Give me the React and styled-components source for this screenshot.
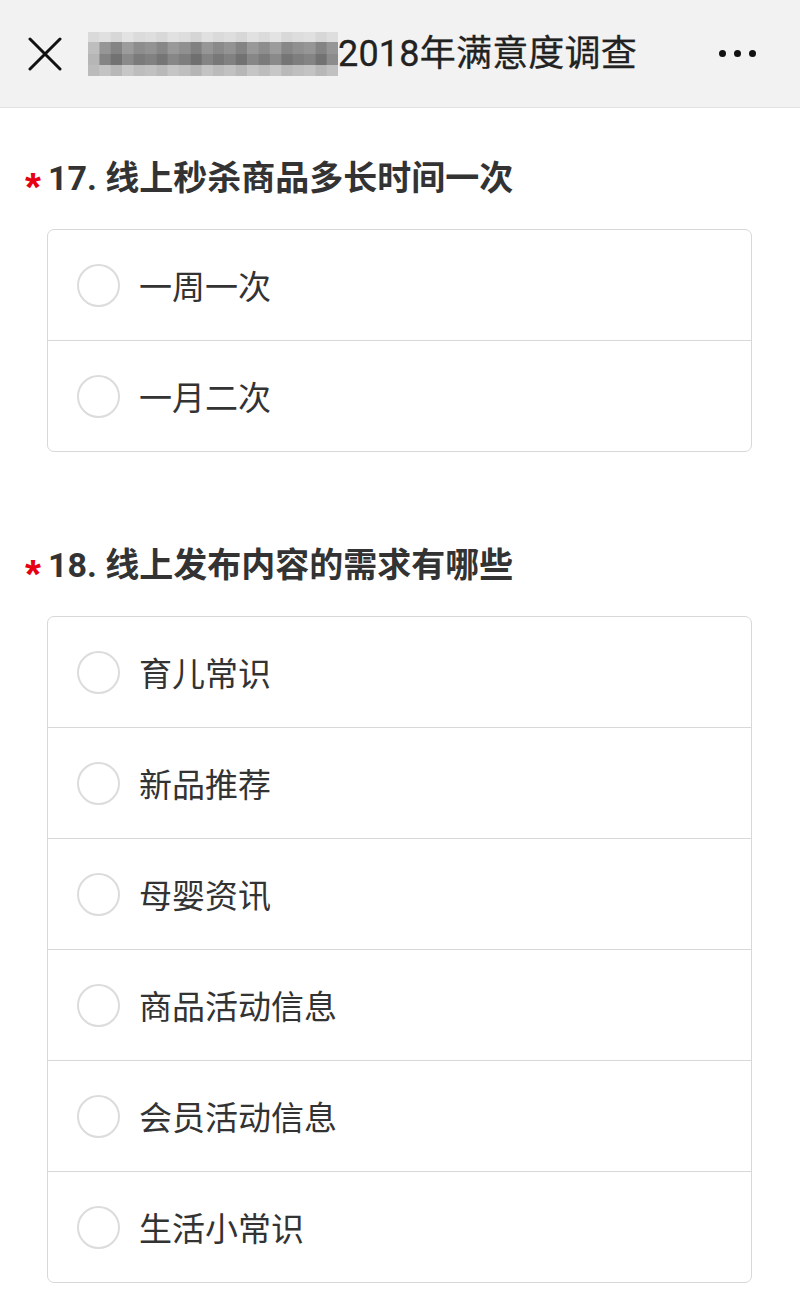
import React from "react";
import styled, { createGlobalStyle } from "styled-components";

const Global = createGlobalStyle`
  html, body { margin: 0; padding: 0; background: #fff; }
  body { font-family: Roboto, "Noto Sans CJK SC", sans-serif; color: #333; }
  * { box-sizing: border-box; }
`;

const Page = styled.div`
  width: 800px;
  min-height: 1310px;
  background: #fff;
`;

const Header = styled.header`
  height: 108px;
  background: #f2f2f2;
  border-bottom: 1px solid #e2e2e2;
  display: flex;
  align-items: center;
  padding: 0 44px 0 28px;
`;

const CloseBtn = styled.div`
  width: 34px;
  height: 34px;
  display: flex;
  align-items: center;
  justify-content: center;
  margin-top: 1px;
`;

const TitleWrap = styled.div`
  flex: 1;
  display: flex;
  align-items: center;
  margin-left: 26px;
`;

const Blur = styled.svg`
  display: block;
  width: 250px;
  height: 44px;
  margin-top: 1px;
`;

const HeaderTitle = styled.h1`
  margin: 0;
  font-family: Roboto, "Noto Sans CJK SC", sans-serif;
  font-weight: 400;
  font-size: 36px;
  line-height: 44px;
  color: #222;
  letter-spacing: 0.2px;
  -webkit-text-stroke: 0.3px #222;
`;

const More = styled.div`
  display: flex;
  gap: 8px;
  align-items: center;
`;

const Dot = styled.span`
  width: 7px;
  height: 7px;
  border-radius: 50%;
  background: #111;
`;

const Section = styled.section`
  padding: 50px 48px 43px 47px;
`;

const QTitle = styled.h2`
  margin: 0 0 31px -22px;
  height: 40px;
  display: flex;
  align-items: center;
  font-family: Roboto, "Noto Sans CJK SC", sans-serif;
  font-weight: 700;
  font-size: 34px;
  line-height: 40px;
  color: #333;
`;

const Star = styled.span`
  display: block;
  width: 23px;
  height: 40px;
  overflow: visible;
  color: #e60012;
  font-size: 41px;
  line-height: 58px;
  font-family: "Liberation Sans", sans-serif;
  font-weight: 700;
`;

const Box = styled.div`
  border: 1px solid #d8d8d8;
  border-radius: 7px;
  overflow: hidden;
`;

const Row = styled.label`
  display: flex;
  align-items: center;
  padding-left: 29px;
  border-top: ${(p) => (p.$first ? "none" : "1px solid #d8d8d8")};
  height: ${(p) => (p.$first ? "110px" : "111px")};
`;

const Radio = styled.span`
  width: 43px;
  height: 43px;
  border-radius: 50%;
  border: 2px solid #dcdcdc;
  background: #fff;
  flex: none;
`;

const OptText = styled.span`
  margin-left: 19px;
  font-family: "Noto Sans CJK SC", sans-serif;
  font-size: 33px;
  color: #333;
  line-height: 40px;
`;

function BlurBlock() {
  const cols = [];
  const n = 22;
  const w = 250 / n;
  const seed = [3, 7, 1, 9, 4, 6, 2, 8, 5, 0, 7, 3, 6, 1, 8, 4, 9, 2, 5, 7, 1, 6];
  for (let i = 0; i < n; i++) {
    const v = seed[i] - 4.5;
    const first = i === 0;
    const last = i === n - 1;
    const top = Math.round(220 + v * 1.5);
    const mid1 = first ? 190 : last ? 150 : Math.round(142 + v * 3);
    const mid2 = first ? 182 : last ? 140 : Math.round(124 + v * 3);
    const bot = Math.round(190 + v * 2);
    const g = (c) => `rgb(${c},${c},${c})`;
    cols.push(
      <g key={i}>
        <rect x={i * w} y={0} width={w + 0.5} height={10} fill={g(top)} />
        <rect x={i * w} y={10} width={w + 0.5} height={12} fill={g(mid1)} />
        <rect x={i * w} y={22} width={w + 0.5} height={11} fill={g(mid2)} />
        <rect x={i * w} y={33} width={w + 0.5} height={11} fill={g(bot)} />
      </g>
    );
  }
  return (
    <Blur viewBox="0 0 250 44" preserveAspectRatio="none">
      {cols}
    </Blur>
  );
}

const q17 = ["一周一次", "一月二次"];
const q18 = ["育儿常识", "新品推荐", "母婴资讯", "商品活动信息", "会员活动信息", "生活小常识"];

function Question({ no, title, options }) {
  return (
    <Section>
      <QTitle>
        <Star>*</Star>
        <span>{no}. {title}</span>
      </QTitle>
      <Box>
        {options.map((o, i) => (
          <Row key={o} $first={i === 0}>
            <Radio />
            <OptText>{o}</OptText>
          </Row>
        ))}
      </Box>
    </Section>
  );
}

export default function App() {
  return (
    <Page>
      <Global />
      <Header>
        <CloseBtn>
          <svg width="34" height="34" viewBox="0 0 34 34">
            <path d="M2 2 L32 32 M32 2 L2 32" stroke="#111" strokeWidth="3" strokeLinecap="round" />
          </svg>
        </CloseBtn>
        <TitleWrap>
          <BlurBlock />
          <HeaderTitle>2018年满意度调查</HeaderTitle>
        </TitleWrap>
        <More>
          <Dot />
          <Dot />
          <Dot />
        </More>
      </Header>
      <Question no={17} title="线上秒杀商品多长时间一次" options={q17} />
      <Question no={18} title="线上发布内容的需求有哪些" options={q18} />
    </Page>
  );
}
